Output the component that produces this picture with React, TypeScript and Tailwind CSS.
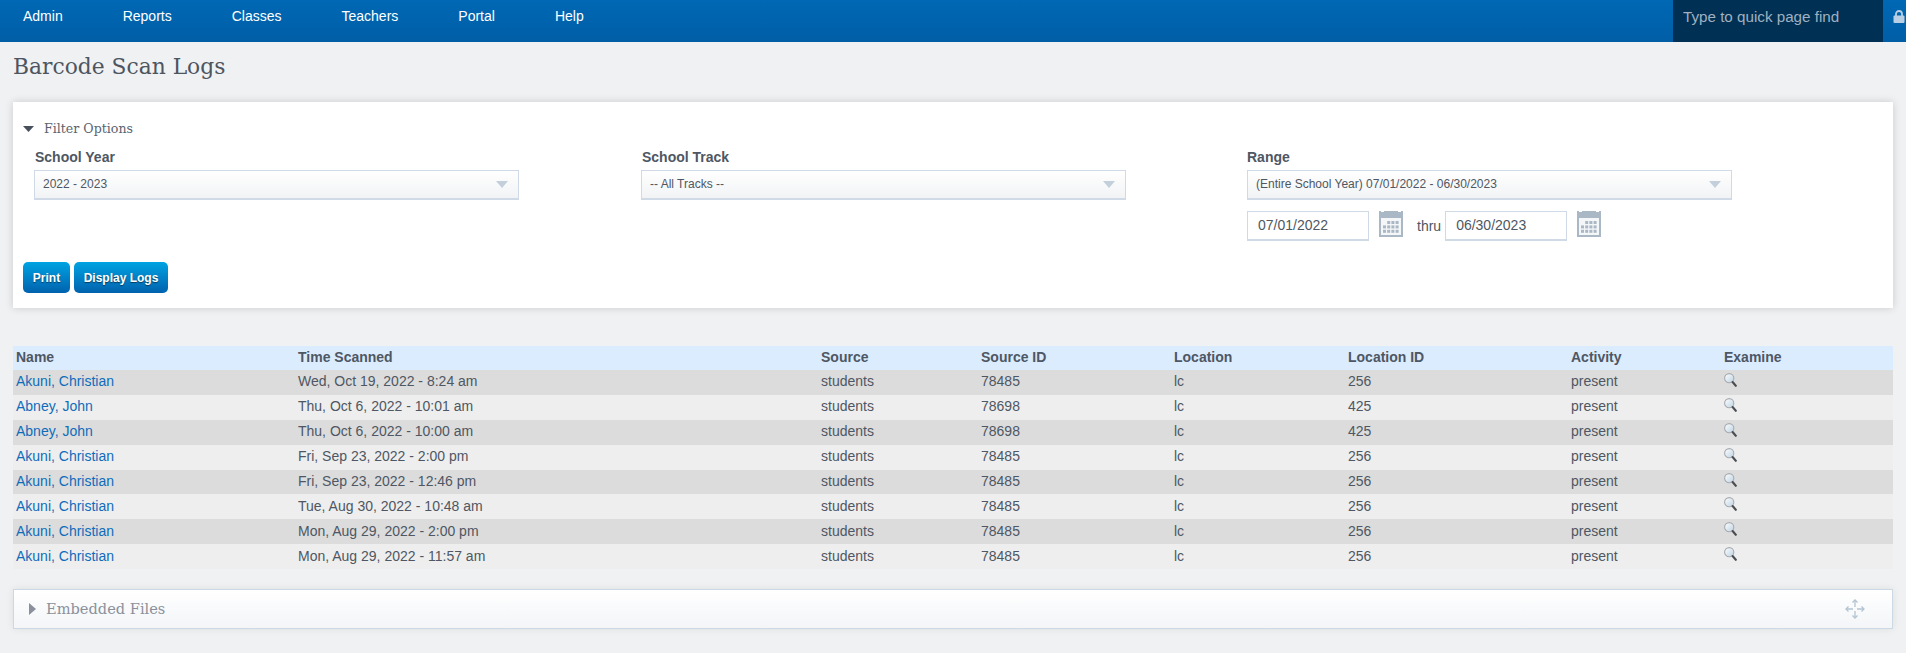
const navItems = ["Admin", "Reports", "Classes", "Teachers", "Portal", "Help"];

const logs = [
  ["Akuni, Christian", "Wed, Oct 19, 2022 - 8:24 am", "78485", "256"],
  ["Abney, John", "Thu, Oct 6, 2022 - 10:01 am", "78698", "425"],
  ["Abney, John", "Thu, Oct 6, 2022 - 10:00 am", "78698", "425"],
  ["Akuni, Christian", "Fri, Sep 23, 2022 - 2:00 pm", "78485", "256"],
  ["Akuni, Christian", "Fri, Sep 23, 2022 - 12:46 pm", "78485", "256"],
  ["Akuni, Christian", "Tue, Aug 30, 2022 - 10:48 am", "78485", "256"],
  ["Akuni, Christian", "Mon, Aug 29, 2022 - 2:00 pm", "78485", "256"],
  ["Akuni, Christian", "Mon, Aug 29, 2022 - 11:57 am", "78485", "256"],
];

const sans = "font-['Liberation_Sans',Arial,sans-serif]";
const slab = "font-['DejaVu_Serif',serif]";

function Select({ value }: { value: string }) {
  return (
    <div className="flex h-[30px] w-[485px] items-center justify-between border border-b-2 border-[#cfdae6] bg-gradient-to-b from-white to-[#f1f3f5] pb-[1px] pl-[8px] pr-[10px] text-[12px] text-[#4e5763]">
      <span>{value}</span>
      <svg width="12" height="7" viewBox="0 0 12 7">
        <path d="M0 0h12L6 7z" fill="#c3cfda" />
      </svg>
    </div>
  );
}

function Calendar() {
  return (
    <svg width="24" height="26" viewBox="0 0 24 26">
      <path d="M0 0h2v1h3V0h14v1h3V0h2v26H0z" fill="#aab8c5" />
      <rect x="2" y="7" width="20" height="17" fill="#f4f6f8" />
      {[0, 1, 2].map((r) =>
        [0, 1, 2, 3].map((c) =>
          r === 0 && c === 0 ? null : (
            <rect key={`${r}-${c}`} x={4 + c * 4.2} y={10 + r * 4.4} width="3" height="3" fill="#aab8c5" />
          ),
        ),
      )}
    </svg>
  );
}

function DateBox({ value }: { value: string }) {
  return (
    <div className="flex h-[30px] w-[122px] items-center border border-b-2 border-[#cfdae6] bg-white pl-[10px] text-[14px] text-[#4e5763]">
      {value}
    </div>
  );
}

function Magnifier({ id }: { id: string }) {
  return (
    <svg width="13" height="14" viewBox="0 0 13 14">
      <defs>
        <linearGradient id={id} x1="0" y1="0" x2="1" y2="1">
          <stop offset="0" stopColor="#ffffff" />
          <stop offset="1" stopColor="#bcd2e2" />
        </linearGradient>
      </defs>
      <circle cx="5.2" cy="5.2" r="4.6" fill={`url(#${id})`} stroke="#a7abb0" strokeWidth="1.1" />
      <path d="M8.6 9l3.2 3.8" stroke="#4a4d51" strokeWidth="2.1" strokeLinecap="round" />
    </svg>
  );
}

export default function App() {
  return (
    <div className={`min-h-screen bg-[#f0f1f3] ${sans} text-[#4e5763]`}>
      {/* Top nav */}
      <nav className="flex h-[42px] items-start justify-between bg-gradient-to-b from-[#0068b4] to-[#005ea6]">
        <ul className="flex gap-[60px] pl-[23px] pt-[8px] text-[14px] leading-[16px] text-white">
          {navItems.map((item) => (
            <li key={item}>{item}</li>
          ))}
        </ul>
        <div className="flex">
          <div className="flex h-[42px] w-[210px] items-start bg-[#003053] pl-[10px] pt-[8px] text-[15.2px] leading-[18px] text-[#9fb1c2]">
            Type to quick page find
          </div>
          <div className="flex w-[23px] justify-end pr-[1px] pt-[10px]">
            <svg width="12" height="13" viewBox="0 0 12 13">
              <path d="M3 6V4a3 3 0 0 1 6 0v2" fill="none" stroke="#b9d0e4" strokeWidth="1.8" />
              <rect x="0.5" y="5.5" width="11" height="7.5" rx="1" fill="#b9d0e4" />
            </svg>
          </div>
        </div>
      </nav>

      <div className="px-[13px]">
        <h1 className={`${slab} pt-[12px] text-[21.8px] leading-[26px] text-[#4d5560]`}>Barcode Scan Logs</h1>

        {/* Filter card */}
        <section className="mt-[22px] h-[206px] bg-white pl-[10px] pt-[19px] shadow-[0_0_8px_rgba(0,0,0,0.16)]">
          <div className="flex items-center gap-[10px]">
            <svg width="11" height="6" viewBox="0 0 11 6">
              <path d="M0 0h11L5.5 6z" fill="#48505c" />
            </svg>
            <span className={`${slab} text-[12.6px] leading-[16px] text-[#5b636e]`}>Filter Options</span>
          </div>

          <div className="mt-[12px] grid grid-cols-[607px_606px_1fr] pl-[11px]">
            <div>
              <label className="block pl-[1px] text-[14px] font-bold leading-[16px]">School Year</label>
              <div className="mt-[5px]">
                <Select value="2022 - 2023" />
              </div>
            </div>
            <div>
              <label className="block pl-[1px] text-[14px] font-bold leading-[16px]">School Track</label>
              <div className="mt-[5px]">
                <Select value="-- All Tracks --" />
              </div>
            </div>
            <div>
              <label className="block text-[14px] font-bold leading-[16px]">Range</label>
              <div className="mt-[5px]">
                <Select value="(Entire School Year) 07/01/2022 - 06/30/2023" />
              </div>
              <div className="mt-[11px] flex items-start">
                <DateBox value="07/01/2022" />
                <div className="ml-[10px]">
                  <Calendar />
                </div>
                <span className="ml-[14px] mr-[4px] text-[14px] leading-[30px]">thru</span>
                <DateBox value="06/30/2023" />
                <div className="ml-[10px]">
                  <Calendar />
                </div>
              </div>
            </div>
          </div>

          <div className="mt-[21px] flex gap-[4px]">
            <button className="h-[31px] w-[47px] rounded-[5px] bg-gradient-to-b from-[#00a3e2] to-[#0062ae] text-[12px] font-bold text-white [text-shadow:0_1px_1px_rgba(0,0,0,0.5)]">
              Print
            </button>
            <button className="h-[31px] w-[94px] rounded-[5px] bg-gradient-to-b from-[#00a3e2] to-[#0062ae] text-[12px] font-bold text-white [text-shadow:0_1px_1px_rgba(0,0,0,0.5)]">
              Display Logs
            </button>
          </div>
        </section>

        {/* Logs */}
        <table className="mt-[38px] w-full table-fixed border-collapse text-left text-[14px]">
          <thead>
            <tr className="h-[24px] bg-[#dbecff]">
              <th className="w-[282px] pb-[2px] pl-[3px] font-bold">Name</th>
              <th className="w-[523px] pb-[2px] pl-[3px] font-bold">Time Scanned</th>
              <th className="w-[160px] pb-[2px] pl-[3px] font-bold">Source</th>
              <th className="w-[193px] pb-[2px] pl-[3px] font-bold">Source ID</th>
              <th className="w-[174px] pb-[2px] pl-[3px] font-bold">Location</th>
              <th className="w-[223px] pb-[2px] pl-[3px] font-bold">Location ID</th>
              <th className="w-[153px] pb-[2px] pl-[3px] font-bold">Activity</th>
              <th className="pb-[2px] pl-[3px] font-bold">Examine</th>
            </tr>
          </thead>
          <tbody>
            {logs.map((log, i) => (
              <tr key={i} className={`h-[24.875px] ${i % 2 === 0 ? "bg-[#dcdcdc]" : "bg-[#eeeeee]"}`}>
                <td className="p-0 pb-[1px] pl-[3px] text-[#0e6cbb]">{log[0]}</td>
                <td className="p-0 pb-[1px] pl-[3px]">{log[1]}</td>
                <td className="p-0 pb-[1px] pl-[3px]">students</td>
                <td className="p-0 pb-[1px] pl-[3px]">{log[2]}</td>
                <td className="p-0 pb-[1px] pl-[3px]">lc</td>
                <td className="p-0 pb-[1px] pl-[3px]">{log[3]}</td>
                <td className="p-0 pb-[1px] pl-[3px]">present</td>
                <td className="p-0 pl-[3px] align-top pt-[3px]">
                  <Magnifier id={`lens-${i}`} />
                </td>
              </tr>
            ))}
          </tbody>
        </table>

        {/* Embedded files */}
        <section className="mt-[20px] flex h-[40px] items-center justify-between border border-[#ccd8e4] bg-gradient-to-b from-white to-[#f3f5f8] pl-[15px] pr-[27px] shadow-[0_0_8px_rgba(0,0,0,0.08)]">
          <div className="flex items-center gap-[10px]">
            <svg width="7" height="12" viewBox="0 0 7 12">
              <path d="M0 0l7 6L0 12z" fill="#8a919c" />
            </svg>
            <span className={`${slab} text-[14.6px] text-[#8a919c]`}>Embedded Files</span>
          </div>
          <svg width="20" height="20" viewBox="0 0 20 20" fill="none" stroke="#b4c3d2" strokeWidth="1.3">
            <path d="M10 1v7M10 12v7M1 10h7M12 10h7" />
            <path d="M7.5 3.5L10 1l2.5 2.5M7.5 16.5L10 19l2.5-2.5M3.5 7.5L1 10l2.5 2.5M16.5 7.5L19 10l-2.5 2.5" />
          </svg>
        </section>
      </div>
    </div>
  );
}
